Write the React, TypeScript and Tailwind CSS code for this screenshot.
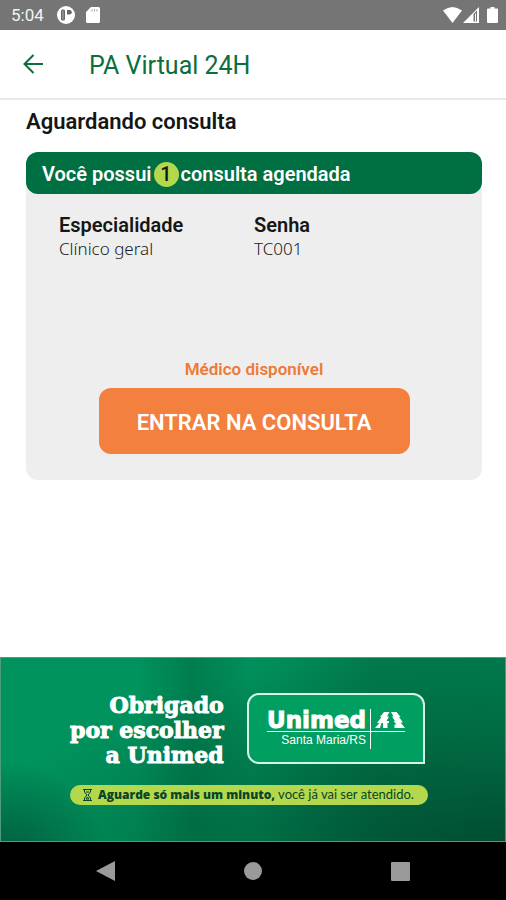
const StatusBar = () => (
  <div className="flex h-[30px] items-center justify-between bg-[#757575] pl-[11px] pr-2 text-white">
    <div className="flex items-center">
      <span className="pt-0.5 text-[17px] text-gray-100">5:04</span>
      <svg className="ml-[13px] h-[18px] w-[18px]" viewBox="0 0 18 18">
        <circle cx="9" cy="9" r="9" fill="#fff" />
        <rect x="4.500" y="4" width="3" height="10" rx="0.500" fill="#8a8a8a" stroke="#666" />
        <path d="M10 4h2.500a2 2 0 0 1 0 4.500H10z" fill="#666" />
      </svg>
      <svg className="ml-[11px] h-4 w-[14px]" viewBox="0 0 14 16">
        <path d="M5 0h7.500A1.500 1.500 0 0 1 14 1.500v13a1.500 1.500 0 0 1-1.500 1.500h-11A1.500 1.500 0 0 1 0 14.500V5z" fill="#fff" />
        <path d="M6 2v2.500M8.500 2v2.500M11 2v2.500" stroke="#aaa" strokeWidth="1" />
      </svg>
    </div>
    <div className="flex items-center">
      <svg className="h-4 w-[19px]" viewBox="0 0 19 16">
        <path d="M0 3.500Q9.500-3.500 19 3.500L9.500 16z" fill="#fff" />
      </svg>
      <svg className="ml-[1px] h-4 w-4" viewBox="0 0 16 16">
        <path d="M16 0v16H0z" fill="#fff" />
        <path d="M10.500 7L14 3.500V14.500h-3.500z" fill="#757575" />
        <path d="M12.500 6.500v8" stroke="#fff" strokeWidth="1" />
      </svg>
      <svg className="ml-2 h-4 w-[11px]" viewBox="0 0 11 16">
        <path d="M3.500 0h4v1.500H10a1 1 0 0 1 1 1V15a1 1 0 0 1-1 1H1a1 1 0 0 1-1-1V2.500a1 1 0 0 1 1-1h2.500z" fill="#fff" />
      </svg>
    </div>
  </div>
);

const Header = () => (
  <header className="flex h-[70px] items-center border-b-2 border-[#e8e8e8] pl-[23px] text-[#0b6e3c]">
    <button type="button" aria-label="Voltar">
      <svg className="h-5 w-5" viewBox="0 0 20 20" fill="none" stroke="currentColor" strokeWidth="2">
        <path d="M20 10H1.500M10.500 1L1.500 10l9 9" />
      </svg>
    </button>
    <h1 className="ml-[46px] pt-1 text-[25px] leading-8">PA Virtual 24H</h1>
  </header>
);

const Field = ({ label, value }: { label: string; value: string }) => (
  <div>
    <dt className="text-[20px] font-semibold leading-6 text-[#161616]">{label}</dt>
    <dd className="font-['Noto_Sans',sans-serif] text-[17px] font-light leading-6 text-[#222]">
      {value}
    </dd>
  </div>
);

const UnimedLogo = () => (
  <div className="flex h-[71px] w-[178px] justify-center rounded-[12px] rounded-br-none border-2 border-[#d8f3e4] bg-[#009e60] pt-[14px] text-white">
    <div className="flex h-10 flex-col items-end">
      <span className="h-[23px] border-b border-white pr-1 font-['DejaVu_Sans',sans-serif] text-[23px] font-bold leading-[22px] [-webkit-text-stroke:1px_#fff]">
        Unimed
      </span>
      <span className="pr-1 font-['Liberation_Sans',sans-serif] text-[12px] leading-4">
        Santa Maria/RS
      </span>
    </div>
    <div className="h-10 border-l border-white">
      <div className="flex h-[23px] items-end border-b border-white pb-[3px] pl-1">
        <svg className="h-4 w-[30px]" viewBox="0 0 30 16" fill="#fff">
          <path d="M9 0h5.500l-2.500 4.500h2L11.500 9H14v2h-1.500v5H8v-5H6.500L5 16H0l4.500-5H2L6.500 5H5z" />
          <path d="M16 0h5.500l4 5H24l4 5.500h-2.500L30 16H19.500v-3.500h2L18.500 9H20l-3-4.500h1.500z" />
        </svg>
      </div>
    </div>
  </div>
);

const Banner = () => (
  <section className="flex h-[185px] flex-col items-center border border-[#4e9c79] bg-[radial-gradient(circle_at_0%_115%,#00573a_0%,transparent_20%),radial-gradient(ellipse_at_100%_110%,#004a2f_0%,#00553666_45%,transparent_75%),linear-gradient(90deg,#00935d_0%,#00935d_27%,#007d4e_38%,#00905b_50%,#008a57_58%,#007a4c_75%,#007b4d_100%)] pr-2 pt-[35px]">
    <div className="flex w-[358px] items-start justify-between pr-[3px]">
      <p className="text-right font-['DejaVu_Serif',serif] text-[22px] font-bold leading-[25px] text-white [-webkit-text-stroke:1px_#fff]">
        Obrigado
        <br />
        por escolher
        <br />
        a Unimed
      </p>
      <UnimedLogo />
    </div>
    <p className="mt-[17px] flex h-5 w-[358px] items-center whitespace-nowrap rounded-full bg-[#b3d84c] pl-[13px] font-['Lato',sans-serif] text-[13px] text-[#07442a]">
      <svg className="mr-[6px] h-3 w-[9px]" viewBox="0 0 9 12" fill="none" stroke="currentColor">
        <path d="M0 .500h9M0 11.500h9M1.500 1v2L4 6 1.500 9v2M7.500 1v2L5 6l2.500 3v2M3 3h3M3 10l1.500-2L6 10z" />
      </svg>
      <span>
        <b className="font-['Open_Sans',sans-serif] text-[12px] font-extrabold">
          Aguarde só mais um minuto,
        </b>{" "}
        você já vai ser atendido.
      </span>
    </p>
  </section>
);

const NavBar = () => (
  <nav className="flex h-[58px] items-center justify-between bg-black px-24 text-[#9a9a9a]">
    <button type="button" aria-label="Voltar">
      <svg className="h-5 w-[19px]" viewBox="0 0 19 20" fill="currentColor">
        <path d="M0 10L19 0v20z" />
      </svg>
    </button>
    <button type="button" aria-label="Início" className="h-[18px] w-[18px] rounded-full bg-current" />
    <button type="button" aria-label="Recentes" className="h-[19px] w-[19px] rounded-[1px] bg-current" />
  </nav>
);

const App = () => {
  const total = 1;

  return (
    <div className="flex min-h-screen flex-col bg-white font-['Roboto',sans-serif]">
      <StatusBar />
      <Header />
      <main className="flex-1 pl-[26px] pr-6 pt-2">
        <h2 className="text-[22px] font-semibold leading-7 text-[#161616]">Aguardando consulta</h2>
        <div className="mt-4 rounded-[12px] bg-[#eee] pb-[26px]">
          <div className="flex h-[42px] items-center rounded-[12px] bg-[#006f42] pl-4 pt-0.5 text-[20px] font-semibold text-white">
            Você possui
            <span className="mx-0.5 flex h-[25px] w-[25px] items-center justify-center rounded-full bg-[#b3d84c] font-medium text-[#161616]">
              {total}
            </span>
            consulta agendada
          </div>
          <dl className="grid grid-cols-[195px_1fr] pl-[33px] pt-[19px]">
            <Field label="Especialidade" value="Clínico geral" />
            <Field label="Senha" value="TC001" />
          </dl>
          <p className="mt-24 text-center text-[17px] font-semibold leading-6 text-[#ed7a35]">
            Médico disponível
          </p>
          <button
            type="button"
            className="mx-auto mt-[7px] block h-[66px] w-[311px] rounded-[12px] bg-[#f48040] pt-0.5 text-[22px] font-semibold text-white">
            ENTRAR NA CONSULTA
          </button>
        </div>
      </main>
      <Banner />
      <NavBar />
    </div>
  );
};

export default App;
